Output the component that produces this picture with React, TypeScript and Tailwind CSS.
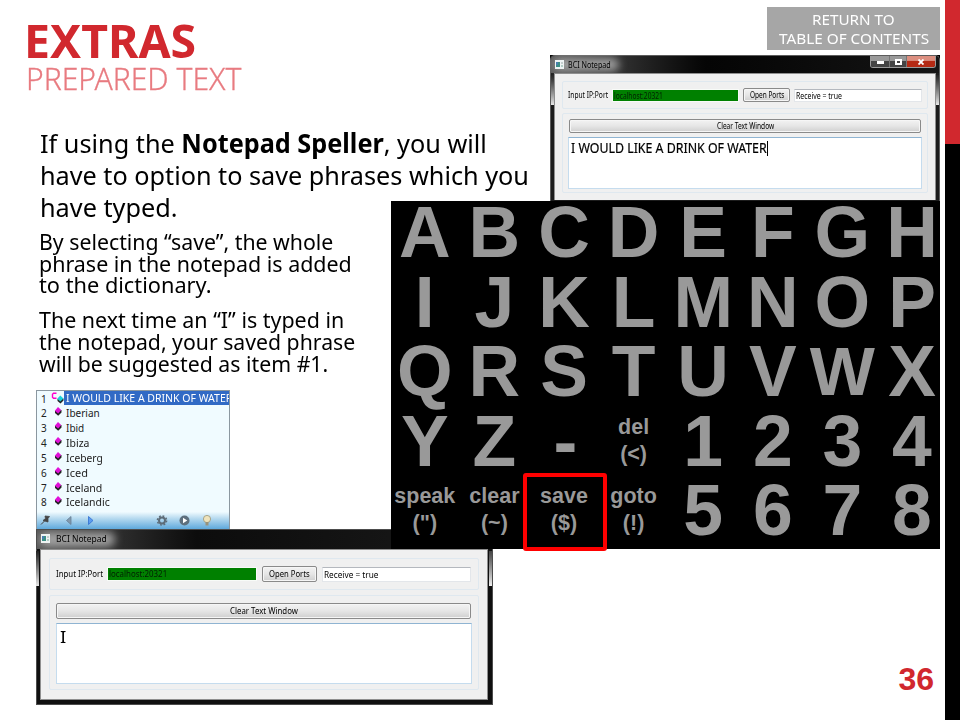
import { useLayoutEffect, useRef, useState, type ReactNode } from "react";

/* Text squeezed or stretched horizontally to an exact width. */
function Fit({ w, className = "", children }: { w: number; className?: string; children: ReactNode }) {
  const ref = useRef<HTMLSpanElement>(null);
  const [scale, setScale] = useState(1);
  useLayoutEffect(() => {
    if (ref.current) setScale(w / ref.current.offsetWidth);
  }, [w]);
  return (
    <span className={`block shrink-0 text-left whitespace-nowrap ${className}`} style={{ width: w }}>
      <span ref={ref} className="inline-block origin-left" style={{ transform: `scaleX(${scale})` }}>
        {children}
      </span>
    </span>
  );
}

function AppIcon() {
  return (
    <svg viewBox="0 0 9 9" className="size-[9px] shrink-0">
      <rect width="9" height="9" fill="#eef3f3" />
      <rect x="1" y="2" width="4" height="5" fill="#3c8f86" />
      <rect x="1" y="2" width="2" height="3" fill="#4a7fb0" />
      <rect x="6.5" y="2" width="1" height="2" fill="#9aa" />
      <rect x="6.5" y="5" width="1" height="2" fill="#7a9" />
    </svg>
  );
}

const buttonLook =
  "flex items-center justify-center rounded-[2px] border border-[#8a8a8a] bg-linear-to-b from-[#f3f3f3] via-[#e6e6e6] to-[#cfcfcf] shadow-[inset_0_0_0_1px_#f6f6f6]";

function TopWindow() {
  return (
    <div className="absolute left-[550px] top-[55px] flex h-[146px] w-[390px] flex-col overflow-hidden bg-black text-black">
      <div className="absolute inset-0 rounded-t-[5px] border border-b-0 border-[#5c5c5c] bg-[#1c1c1c]" />
      <div className="absolute left-px top-[20px] h-[30px] w-[3px] bg-linear-to-b from-[#222] to-[#e8e8e8]" />
      <div className="absolute right-px top-[20px] h-[30px] w-[3px] bg-linear-to-b from-[#222] to-[#e8e8e8]" />
      <div className="relative mx-px mt-px flex h-[17px] items-center rounded-t-[4px] bg-linear-to-r from-[#5a5a5a] via-[#050505] via-40% to-[#151515]">
        <div className="absolute left-[2px] top-[2px] h-[13px] w-[66px] rounded-full bg-[#a0a0a0] blur-[4px]" />
        <div className="relative ml-[4px] flex items-center gap-[4px]">
          <AppIcon />
          <Fit w={43} className="text-[8.5px] leading-[14px]">BCI Notepad</Fit>
        </div>
        <div className="ml-auto mr-[3px] flex h-[12px] w-[66px] self-start overflow-hidden rounded-b-[3px] border border-t-0 border-[#9b9b9b]">
          <div className="flex w-[19px] items-end justify-center border-r border-[#777] bg-linear-to-b from-[#999] from-45% to-[#444] to-50% pb-[3px]">
            <div className="h-[3px] w-[7px] bg-white" />
          </div>
          <div className="flex w-[17px] items-center justify-center border-r border-[#777] bg-linear-to-b from-[#999] from-45% to-[#444] to-50%">
            <div className="h-[6px] w-[7px] border-2 border-white" />
          </div>
          <div className="flex flex-1 items-center justify-center bg-linear-to-b from-[#dc8f80] from-40% to-[#b52a14] to-50%">
            <svg viewBox="0 0 6 6" className="size-[6px]"><path d="M0.5 0.5L5.5 5.5M5.5 0.5L0.5 5.5" stroke="#fff" strokeWidth="1.8" /></svg>
          </div>
        </div>
      </div>
      <div className="relative ml-[4px] mr-[4px] flex h-[127px] flex-col border border-b-0 border-[#8f8f8f] bg-[#f0f0f0] px-[7px] pt-[7px]">
        <div className="flex h-[28px] shrink-0 items-center rounded-[2px] border border-[#dfe8ef] pl-[5px]">
          <Fit w={40} className="text-[8px]">Input IP:Port</Fit>
          <div className="ml-[5px] flex h-[11px] w-[125px] items-center bg-[#008000] pl-px text-[#022002] shadow-[0_0_0_1px_#f8fbf8]">
            <Fit w={49} className="text-[8px] leading-[11px]">localhost:20321</Fit>
          </div>
          <div className={`ml-[5px] h-[14px] w-[47px] ${buttonLook}`}>
            <Fit w={34} className="text-[8px] leading-[12px]">Open Ports</Fit>
          </div>
          <div className="ml-[4px] flex h-[13px] w-[128px] items-center border border-[#e3e6ea] border-t-[#b4b8be] bg-white pl-px">
            <Fit w={46} className="text-[8px] leading-[11px]">Receive = true</Fit>
          </div>
        </div>
        <div className="mt-[4px] h-[80px] rounded-[2px] border border-[#dfe8ef] px-[6px] pt-[5px]">
          <div className={`h-[14px] w-[352px] ${buttonLook}`}>
            <Fit w={57} className="text-[8px] leading-[12px]">Clear Text Window</Fit>
          </div>
          <div className="-ml-px mt-[4px] flex h-[52px] w-[354px] items-start border border-[#c5dcee] border-t-[#8fb4d2] bg-white pl-[2px] pt-px">
            <Fit w={196} className="text-[13.5px] leading-[18px] [-webkit-text-stroke:0.2px_#000]">I WOULD LIKE A DRINK OF WATER</Fit>
            <div className="mt-[2px] h-[15px] w-px bg-black" />
          </div>
        </div>
      </div>
    </div>
  );
}

function BottomWindow() {
  return (
    <div className="absolute left-[36px] top-[529px] flex h-[176px] w-[457px] flex-col bg-black text-black">
      <div className="absolute inset-0 border border-[#4c4c4c] bg-[#101010]" />
      <div className="absolute left-0 top-[22px] h-[35px] w-[3px] bg-linear-to-b from-[#222] to-[#e8e8e8]" />
      <div className="absolute right-px top-[22px] h-[35px] w-[3px] bg-linear-to-b from-[#444] to-[#f0f0f0]" />
      <div className="relative mx-px mt-px flex h-[19px] items-center overflow-hidden bg-linear-to-r from-[#555] via-[#0c0c0c] via-35% to-[#1a1a1a]">
        <div className="absolute left-[2px] top-[2px] h-[15px] w-[76px] rounded-full bg-[#a0a0a0] blur-[4px]" />
        <div className="relative -mt-[2px] ml-[4px] flex items-center gap-[6px]">
          <AppIcon />
          <Fit w={51} className="text-[9.5px] leading-[14px]">BCI Notepad</Fit>
        </div>
      </div>
      <div className="relative ml-[4px] mr-[5px] flex h-[151px] flex-col border border-[#8f8f8f] bg-[#f0f0f0] px-[8px] pt-[8px]">
        <div className="flex h-[32px] shrink-0 items-center rounded-[2px] border border-[#dfe8ef] pl-[6px]">
          <Fit w={47} className="text-[9px]">Input IP:Port</Fit>
          <div className="ml-[5px] flex h-[12px] w-[148px] items-center bg-[#008000] pl-px text-[#022002] shadow-[0_0_0_1px_#f8fbf8]">
            <Fit w={58} className="text-[9px] leading-[12px]">localhost:20321</Fit>
          </div>
          <div className={`ml-[6px] h-[16px] w-[55px] ${buttonLook}`}>
            <Fit w={41} className="text-[9px] leading-[14px]">Open Ports</Fit>
          </div>
          <div className="ml-[5px] flex h-[15px] w-[149px] items-center border border-[#e3e6ea] border-t-[#b4b8be] bg-white pl-px">
            <Fit w={54} className="text-[9px] leading-[13px]">Receive = true</Fit>
          </div>
        </div>
        <div className="mt-[5px] h-[95px] rounded-[2px] border border-[#dfe8ef] px-[6px] pt-[7px]">
          <div className={`h-[16px] w-[415px] ${buttonLook}`}>
            <Fit w={68} className="text-[9px] leading-[14px]">Clear Text Window</Fit>
          </div>
          <div className="mt-[4px] h-[61px] w-[416px] border border-[#c5dcee] border-t-[#8fb4d2] bg-white pl-[2.5px] pt-[4px] text-[15.5px] leading-[18px]">
            <Fit w={6}>I</Fit>
          </div>
        </div>
      </div>
    </div>
  );
}

const letters = "ABCDEFGHIJKLMNOPQRSTUVWX".split("");
const keys: (string | [string, string])[] = [
  ...letters, "Y", "Z", "-", ["del", "(<)"], "1", "2", "3", "4",
  ["speak", '(")'], ["clear", "(~)"], ["save", "($)"], ["goto", "(!)"], "5", "6", "7", "8",
];

function Speller() {
  return (
    <div className="absolute left-[391px] top-[201px] h-[348px] w-[549px] overflow-hidden bg-black">
      <div className="-ml-px grid w-[556.8px] grid-cols-8 font-['Liberation_Sans',Arial,sans-serif] font-bold text-[#999]">
        {keys.map((k) =>
          typeof k === "string" ? (
            <div
              key={k}
              className={`-mt-[3px] mb-[3px] flex h-[69.6px] justify-center leading-[69.6px] ${k === "W" ? "text-[69px]" : k === "-" ? "pl-[3px] text-[71.5px]" : "text-[71.5px]"}`}
            >
              {k}
            </div>
          ) : (
            <div key={k[0]} className="flex h-[69.6px] flex-col items-center pt-[4px] text-[21.5px] leading-[26.8px]">
              <span>{k[0]}</span>
              <span>{k[1]}</span>
            </div>
          ),
        )}
      </div>
    </div>
  );
}

function Diamond() {
  return (
    <svg viewBox="0 0 8 9" className="h-[9px] w-[8px]">
      <path d="M1 4v2l3.2 2.8L7.5 5.500V3z" fill="#222" />
      <path d="M4 0L7.2 3L4.200 6.500L0.8 3.800z" fill="#e010d8" />
    </svg>
  );
}

const words: [string, number][] = [
  ["Iberian", 34], ["Ibid", 18], ["Ibiza", 23], ["Iceberg", 37], ["Iced", 22], ["Iceland", 36], ["Icelandic", 44],
];

function Suggestions() {
  return (
    <div className="absolute left-[36px] top-[390px] flex h-[139px] w-[194px] flex-col overflow-hidden border border-b-0 border-[#8b97a0] bg-[#f0fbff] text-[10px] leading-[14px] text-[#222]">
      <div className="flex h-[15px] shrink-0 items-center pl-[4px]">
        <span className="w-[10px]">1</span>
        <svg viewBox="0 0 13 12" className="mb-px h-[12px] w-[13px] shrink-0">
          <path d="M5.500 1.200H2.500L1.500 2.200V5.200L2.500 6.200H5.500" fill="none" stroke="#f0c" strokeWidth="1.400" />
          <path d="M6.500 7v2l3 2.500L12.500 8.500V6.500z" fill="#222" />
          <path d="M9.300 3.500L12.500 6.500L9.300 9.500L6.200 6.800z" fill="#1cd0d8" />
        </svg>
        <div className="flex h-[14px] min-w-0 flex-1 items-center self-start overflow-hidden bg-[#316ac5] pl-[2px] text-white">
          <Fit w={166}>I WOULD LIKE A DRINK OF WATER</Fit>
        </div>
      </div>
      {words.map(([word, w], i) => (
        <div key={word} className="flex h-[14.85px] shrink-0 items-center pl-[4px]">
          <span className="w-[13px]">{i + 2}</span>
          <div className="mb-[3px] flex w-[12px]"><Diamond /></div>
          <Fit w={w}>{word}</Fit>
        </div>
      ))}
      <svg viewBox="0 0 192 19" className="mt-auto h-[19px] w-[192px] shrink-0">
        <defs>
          <linearGradient id="bar" x2="0" y2="1">
            <stop offset="0.1" stopColor="#f0fbff" />
            <stop offset="0.45" stopColor="#b5d9ef" />
            <stop offset="1" stopColor="#5fa9dc" />
          </linearGradient>
        </defs>
        <rect width="192" height="19" fill="url(#bar)" />
        <path d="M8 6l4.500 0.500l-1.500 2l0 3.500l-5-1.500l2.500-2z" fill="#444" stroke="#444" strokeWidth="0.8" />
        <path d="M7.500 11L4 14.500" stroke="#444" strokeWidth="1" />
        <path d="M34 6.500v8L29.500 10.500z" fill="#8299ad" stroke="#647e95" strokeWidth="0.8" />
        <path d="M51.500 6.500v8L56 10.500z" fill="#5c9cf0" stroke="#2f6fd0" strokeWidth="0.8" />
        <circle cx="125" cy="10.500" r="3" fill="none" stroke="#5d6c78" strokeWidth="2" />
        <circle cx="125" cy="10.500" r="4.600" fill="none" stroke="#5d6c78" strokeWidth="1.500" strokeDasharray="1.800 1.813" />
        <circle cx="147.500" cy="10.500" r="5" fill="#5d6f7d" />
        <path d="M146 7.800v5.400L150.300 10.500z" fill="#fff" />
        <circle cx="170" cy="9" r="3.600" fill="#eee3bc" stroke="#9a9577" strokeWidth="0.8" />
        <path d="M168.500 12h3v3.500h-3z" fill="#98927c" />
      </svg>
    </div>
  );
}

export default function App() {
  return (
    <div className="relative flex h-[720px] w-[960px] overflow-hidden bg-white font-['Noto_Sans',sans-serif] text-black">
      <main className="flex flex-1 justify-between">
        <section className="flex flex-col pl-[26px]">
          <h1 className="-ml-[2px] mt-[15px] font-bold text-[#d1282e]">
            <Fit w={172} className="text-[47px] leading-[50px]">EXTRAS</Fit>
          </h1>
          <h2 className="font-light text-[#e87b80]">
            <Fit w={215} className="-ml-[0.5px] text-[31px] leading-[26px] [-webkit-text-stroke:0.3px_#e87b80]">PREPARED TEXT</Fit>
          </h2>
          <div className="ml-[13.5px] mt-[36px] text-[26px] leading-[32px]">
            <Fit w={447}>If using the <b>Notepad Speller</b>, you will</Fit>
            <Fit w={489}>have to option to save phrases which you</Fit>
            <Fit w={138}>have typed.</Fit>
          </div>
          <div className="ml-[13px] mt-[8px] text-[21.5px] leading-[21.6px]">
            <Fit w={294}>By selecting “save”, the whole</Fit>
            <Fit w={313}>phrase in the notepad is added</Fit>
            <Fit w={173}>to the dictionary.</Fit>
          </div>
          <div className="ml-[13px] mt-[13.5px] text-[21.5px] leading-[21.7px]">
            <Fit w={305}>The next time an “I” is typed in</Fit>
            <Fit w={316}>the notepad, your saved phrase</Fit>
            <Fit w={289}>will be suggested as item #1.</Fit>
          </div>
        </section>
        <aside className="flex flex-col items-end justify-between pr-[5px]">
          <div className="mt-[7px] flex h-[43px] w-[173px] flex-col items-center justify-center bg-[#a6a6a6] text-[14.5px] leading-[19px] text-white">
            <Fit w={83}>RETURN TO</Fit>
            <Fit w={150}>TABLE OF CONTENTS</Fit>
          </div>
          <div className="mb-[23px] pr-[6px] font-['Liberation_Sans',Arial,sans-serif] text-[32px] font-bold leading-[36px] text-[#d1282e]">36</div>
        </aside>
      </main>
      <div className="flex w-[15px] flex-col">
        <div className="h-[144px] bg-[#d1282e]" />
        <div className="flex-1 bg-black" />
      </div>
      <TopWindow />
      <Suggestions />
      <BottomWindow />
      <Speller />
      <div className="absolute left-[523px] top-[473px] h-[78px] w-[84px] rounded-[3px] border-4 border-[#f00]" />
    </div>
  );
}
